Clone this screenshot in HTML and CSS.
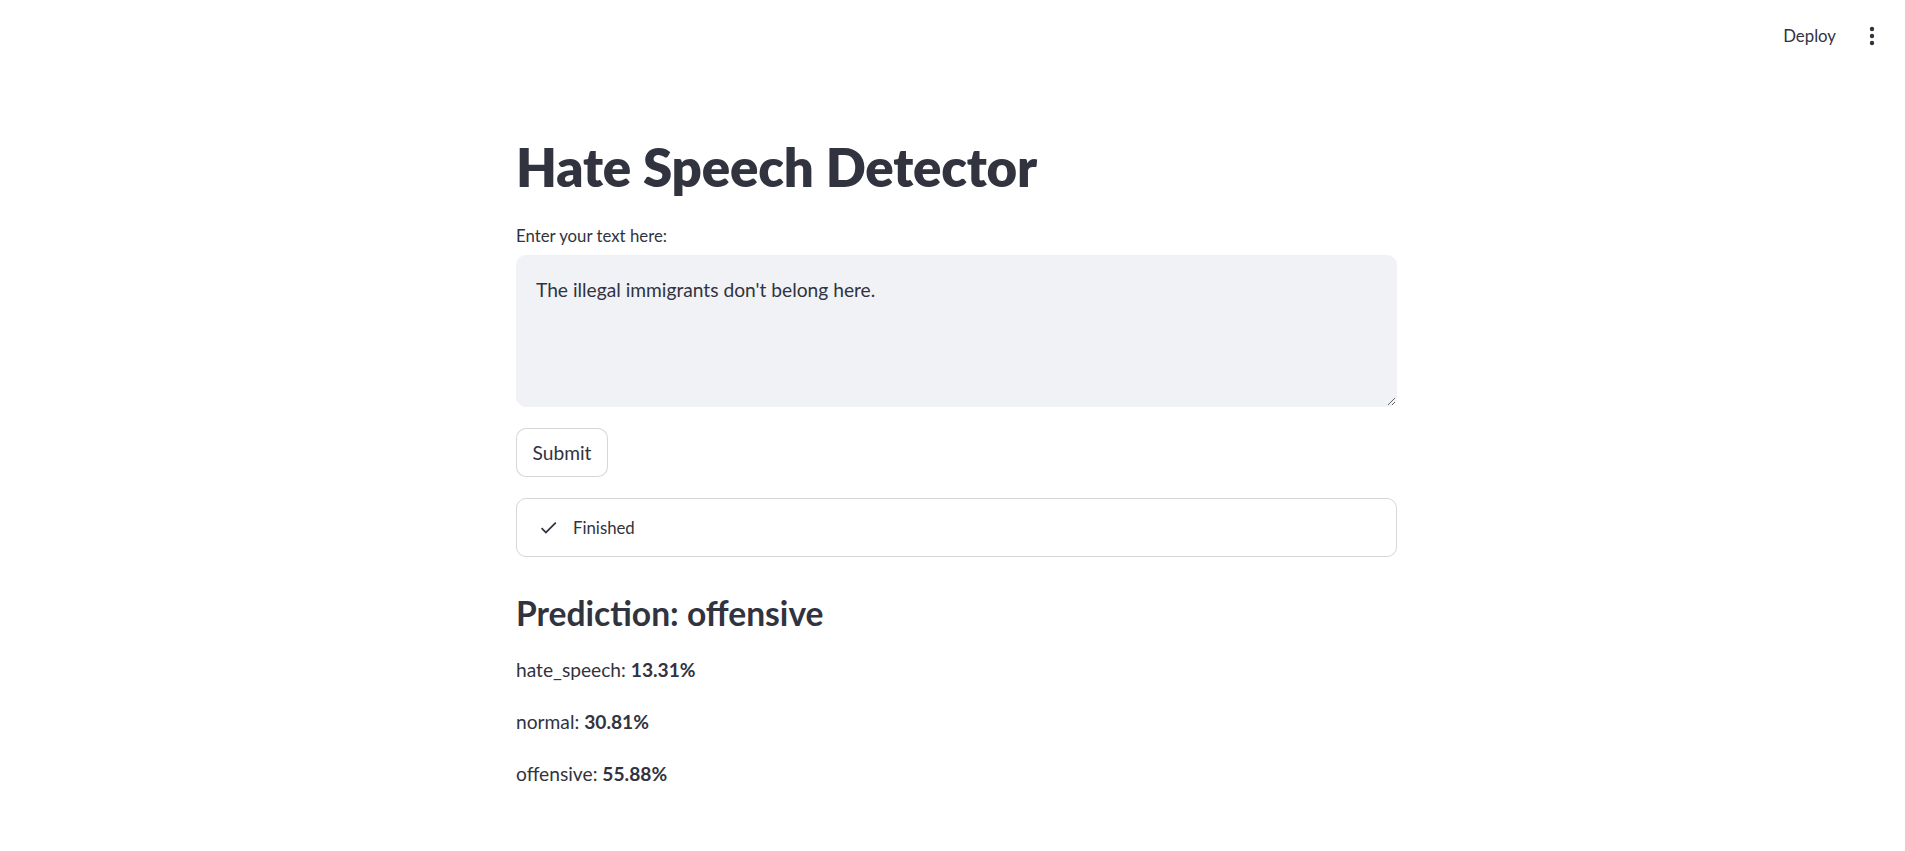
FILE: index.html
```html
<!DOCTYPE html>
<html lang="en">
<head>
<meta charset="utf-8">
<title>Hate Speech Detector</title>
<link rel="stylesheet" href="styles.css">
</head>
<body>
<header class="app-header">
  <div class="toolbar">
    <button class="deploy-btn">Deploy</button>
    <button class="menu-btn" aria-label="Main menu">
      <svg width="6" height="20" viewBox="0 0 6 20"><circle cx="3" cy="3" r="2.2" fill="#31333F"/><circle cx="3" cy="10" r="2.2" fill="#31333F"/><circle cx="3" cy="17" r="2.2" fill="#31333F"/></svg>
    </button>
  </div>
</header>
<main class="main">
  <div class="block">
    <h1 class="title">Hate Speech Detector</h1>
    <div class="field">
      <label class="field-label" for="txt">Enter your text here:</label>
      <textarea id="txt" class="text-input">The illegal immigrants don't belong here.</textarea>
    </div>
    <div class="btn-row"><button class="submit-btn">Submit</button></div>
    <div class="status">
      <svg class="check" width="21" height="21" viewBox="0 0 24 24"><path d="M9 16.17L4.83 12l-1.42 1.41L9 19 21 7l-1.41-1.41z" fill="#31333F"/></svg>
      <span class="status-text">Finished</span>
    </div>
    <h3 class="prediction">Prediction: offensive</h3>
    <p class="score">hate_speech: <strong>13.31%</strong></p>
    <p class="score">normal: <strong>30.81%</strong></p>
    <p class="score">offensive: <strong>55.88%</strong></p>
  </div>
</main>
</body>
</html>
```
FILE: styles.css
```css
* { box-sizing: border-box; }
html, body { margin: 0; padding: 0; background: #ffffff; }
body {
  font-family: "Lato", "Noto Sans", sans-serif;
  color: #31333F;
  font-size: 19.2px;
}
.app-header {
  position: fixed;
  top: 0; left: 0; right: 0;
  height: 72px;
  display: flex;
  justify-content: flex-end;
  align-items: center;
  background: #fff;
  z-index: 10;
}
.toolbar {
  display: flex;
  align-items: center;
  gap: 33px;
  padding-right: 30px;
}
.deploy-btn, .menu-btn {
  border: none;
  background: none;
  padding: 0;
  font-family: inherit;
  color: #31333F;
  cursor: pointer;
}
.deploy-btn { font-size: 16.8px; margin-top: -2px; }
.menu-btn { display: flex; align-items: center; height: 20px; }
.main {
  display: flex;
  justify-content: center;
  padding: 115px 0 40px 8px;
}
.block {
  width: 881px;
  display: flex;
  flex-direction: column;
}
.title {
  font-size: 52.8px;
  font-weight: 800;
  line-height: 64px;
  margin: 0;
  padding: 20px 0 0;
  letter-spacing: -0.2px;
}
.field { display: flex; flex-direction: column; margin-top: 26px; }
.field-label {
  font-size: 16.8px;
  line-height: 22px;
  margin-bottom: 8px;
}
.text-input {
  height: 152px;
  width: 100%;
  background: #F0F2F6;
  border: 1px solid #F0F2F6;
  border-radius: 10px;
  padding: 19px 19px;
  font-family: inherit;
  font-size: 19.2px;
  line-height: 30px;
  color: #31333F;
  resize: vertical;
  outline: none;
}
.btn-row { margin-top: 21px; }
.submit-btn {
  height: 49px;
  width: 92px;
  background: #fff;
  border: 1px solid rgba(49, 51, 63, 0.2);
  border-radius: 10px;
  font-family: inherit;
  font-size: 19.2px;
  color: #31333F;
  padding: 0 14px;
}
.status {
  margin-top: 21px;
  height: 59px;
  border: 1px solid rgba(49, 51, 63, 0.2);
  border-radius: 10px;
  display: flex;
  align-items: center;
  padding-left: 21px;
  gap: 14px;
}
.status-text { font-size: 16.8px; }
.prediction {
  margin: 36px 0 0;
  font-size: 33.6px;
  font-weight: 700;
  line-height: 40px;
}
.score {
  margin: 21px 0 0;
  font-size: 19.2px;
  line-height: 31px;
}
.score strong { font-weight: 700; }
```
